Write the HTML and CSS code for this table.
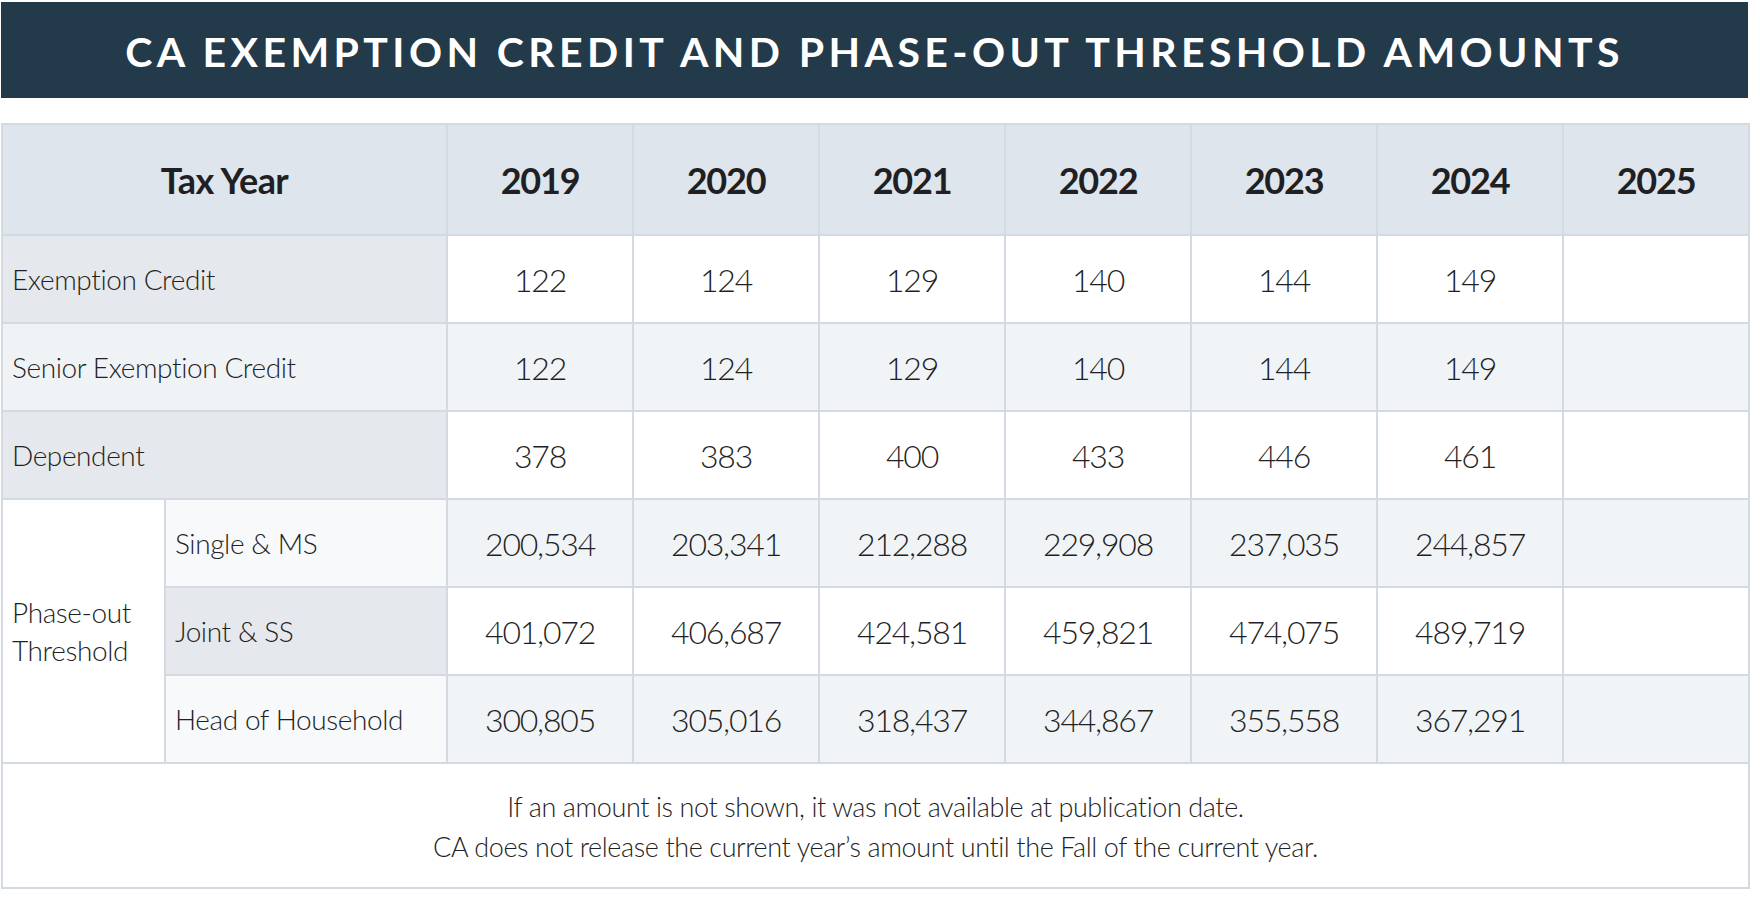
FILE: index.html
```html
<!DOCTYPE html>
<html lang="en">
<head>
<meta charset="utf-8">
<title>CA Exemption Credit and Phase-out Threshold Amounts</title>
<link rel="stylesheet" href="styles.css">
</head>
<body>
<div class="page">
  <header class="title-bar">
    <h1 class="title">CA EXEMPTION CREDIT AND PHASE-OUT THRESHOLD AMOUNTS</h1>
  </header>
  <table class="amounts">
    <colgroup>
      <col class="c-group"><col class="c-sub">
      <col class="c-year"><col class="c-year"><col class="c-year"><col class="c-year"><col class="c-year"><col class="c-year"><col class="c-year">
    </colgroup>
    <thead>
      <tr class="head-row">
        <th colspan="2" class="head-label">Tax Year</th>
        <th>2019</th><th>2020</th><th>2021</th><th>2022</th><th>2023</th><th>2024</th><th>2025</th>
      </tr>
    </thead>
    <tbody>
      <tr class="row-white">
        <th colspan="2" class="label label-dark">Exemption Credit</th>
        <td>122</td><td>124</td><td>129</td><td>140</td><td>144</td><td>149</td><td></td>
      </tr>
      <tr class="row-tint">
        <th colspan="2" class="label label-light">Senior Exemption Credit</th>
        <td>122</td><td>124</td><td>129</td><td>140</td><td>144</td><td>149</td><td></td>
      </tr>
      <tr class="row-white">
        <th colspan="2" class="label label-dark">Dependent</th>
        <td>378</td><td>383</td><td>400</td><td>433</td><td>446</td><td>461</td><td></td>
      </tr>
      <tr class="row-tint">
        <th rowspan="3" class="label label-group">Phase-out<br>Threshold</th>
        <th class="label label-pale">Single &amp; MS</th>
        <td>200,534</td><td>203,341</td><td>212,288</td><td>229,908</td><td>237,035</td><td>244,857</td><td></td>
      </tr>
      <tr class="row-white">
        <th class="label label-dark">Joint &amp; SS</th>
        <td>401,072</td><td>406,687</td><td>424,581</td><td>459,821</td><td>474,075</td><td>489,719</td><td></td>
      </tr>
      <tr class="row-tint">
        <th class="label label-pale">Head of Household</th>
        <td>300,805</td><td>305,016</td><td>318,437</td><td>344,867</td><td>355,558</td><td>367,291</td><td></td>
      </tr>
    </tbody>
    <tfoot>
      <tr>
        <td colspan="9" class="note">
          If an amount is not shown, it was not available at publication date.<br>
          CA does not release the current year’s amount until the Fall of the current year.
        </td>
      </tr>
    </tfoot>
  </table>
</div>
</body>
</html>
```
FILE: styles.css
```css
html, body {
  margin: 0;
  padding: 0;
  background: #ffffff;
}

.page {
  width: 1747px;
  margin: 2px 0 0 1px;
  font-family: "Lato", "Open Sans", sans-serif;
  color: #222226;
}

.title-bar {
  height: 96px;
  background: #233a4a;
  display: flex;
  align-items: center;
  justify-content: center;
}

.title {
  margin: 0;
  padding-top: 2px;
  font-size: 41px;
  font-weight: 700;
  letter-spacing: 4.4px;
  color: #ffffff;
  white-space: nowrap;
}

.amounts {
  margin-top: 25px;
  width: 1747px;
  border-collapse: collapse;
  table-layout: fixed;
}

.c-group { width: 163px; }
.c-sub { width: 282px; }
.c-year { width: 186px; }

.amounts th,
.amounts td {
  border: 2px solid #d3dae1;
  padding: 0;
  height: 86px;
  text-align: center;
  font-size: 32px;
  font-weight: 300;
  letter-spacing: -1.2px;
  color: #1f1f24;
}

.head-row th {
  height: 109px;
  background: #dee5ec;
  font-size: 36px;
  font-weight: 700;
  letter-spacing: -1.2px;
}

.head-row .head-label {
  letter-spacing: -0.6px;
}

.row-white td { background: #ffffff; }
.row-tint td { background: #f0f4f7; }

.amounts .label {
  text-align: left;
  padding-left: 9px;
  font-size: 28px;
  letter-spacing: -0.4px;
}

.label-dark { background: #e5e9ed; }
.label-light { background: #f0f3f6; }
.label-pale { background: #f7f9fb; }
.label-group {
  background: #ffffff;
  line-height: 38px;
  padding-top: 6px;
}

.amounts .note {
  height: 121px;
  background: #ffffff;
  font-size: 27px;
  line-height: 40px;
  letter-spacing: -0.4px;
  padding-top: 2px;
}
```
